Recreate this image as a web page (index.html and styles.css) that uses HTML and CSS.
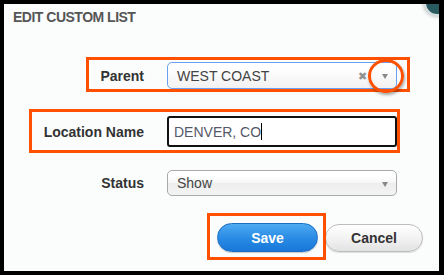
FILE: index.html
```html
<!DOCTYPE html>
<html>
<head>
<meta charset="utf-8">
<link rel="stylesheet" href="styles.css">
</head>
<body>
<div class="dialog">
  <div class="close-btn"></div>
  <h1 class="title">EDIT CUSTOM LIST</h1>
  <div class="form">
    <div class="row row-parent">
      <label class="label">Parent</label>
      <div class="select focused">
        <span class="select-text">WEST COAST</span>
        <span class="clear">&#x2716;</span>
        <span class="arrow"></span>
      </div>
    </div>
    <div class="row row-location">
      <label class="label">Location Name</label>
      <div class="text-input"><span class="input-text">DENVER, CO</span><span class="caret"></span></div>
    </div>
    <div class="row row-status">
      <label class="label">Status</label>
      <div class="select">
        <span class="select-text">Show</span>
        <span class="arrow"></span>
      </div>
    </div>
    <div class="buttons">
      <button class="btn btn-save">Save</button>
      <button class="btn btn-cancel">Cancel</button>
    </div>
  </div>
  <div class="annot annot-parent"></div>
  <div class="annot annot-location"></div>
  <div class="annot annot-save"></div>
  <div class="annot-circle"></div>
</div>
</body>
</html>
```

FILE: styles.css
```css
html, body {
  margin: 0;
  padding: 0;
  background: #000;
}
body {
  width: 444px;
  height: 275px;
  overflow: hidden;
  font-family: "Liberation Sans", Arial, sans-serif;
}
.dialog {
  position: relative;
  margin: 4px 0 0 4px;
  width: 435px;
  height: 267px;
  background: #fbfdfd;
  overflow: hidden;
}
.close-btn {
  position: absolute;
  left: 420px;
  top: -14px;
  width: 22px;
  height: 22px;
  border-radius: 50%;
  background: #285a60;
  border: 2px solid #d6e0e1;
  box-shadow: 0 0 4px rgba(0,0,0,0.35);
}
.title {
  margin: 0;
  padding: 5px 9px 0;
  font-size: 14px;
  line-height: 16px;
  letter-spacing: -0.5px;
  font-weight: bold;
  color: #555;
}
.form {
  margin-top: 37px;
}
.row {
  display: flex;
  align-items: center;
  gap: 23px;
}
.row-parent { height: 27px; }
.row-location { height: 31px; margin-top: 27px; }
.row-status { height: 26px; margin-top: 23px; }
.label {
  width: 140px;
  text-align: right;
  font-size: 14px;
  font-weight: bold;
  color: #333;
}
.select {
  position: relative;
  box-sizing: border-box;
  width: 230px;
  height: 100%;
  display: flex;
  align-items: center;
  padding-left: 9px;
  border: 1px solid #aaa;
  border-radius: 5px;
  background: linear-gradient(#ffffff 20%, #f6f6f6 50%, #eeeeee 52%, #f4f4f4 100%);
  color: #444;
  font-size: 14px;
}
.select.focused {
  border-color: #6b9ff0;
  background: linear-gradient(#ffffff 20%, #f8f8f8 60%, #f2f2f2 100%);
}
.clear {
  position: absolute;
  right: 29px;
  top: 7px;
  font-size: 11px;
  line-height: 12px;
  color: #909090;
}
.arrow {
  position: absolute;
  right: 8px;
  top: 11px;
  width: 0;
  height: 0;
  border-left: 3.5px solid transparent;
  border-right: 3.5px solid transparent;
  border-top: 5px solid #888;
}
.text-input {
  box-sizing: border-box;
  width: 230px;
  height: 100%;
  display: flex;
  align-items: center;
  padding-left: 5px;
  border: 2px solid #111;
  border-radius: 3px;
  background: #fff;
  color: #545867;
  font-size: 14px;
}
.caret {
  display: inline-block;
  width: 1px;
  height: 17px;
  background: #000;
}
.buttons {
  display: flex;
  justify-content: flex-end;
  align-items: center;
  gap: 7px;
  margin-top: 27px;
  padding-right: 16px;
}
.btn {
  box-sizing: border-box;
  font-family: "Liberation Sans", Arial, sans-serif;
  font-size: 14px;
  font-weight: bold;
  border-radius: 15px;
  padding: 0;
}
.btn-save {
  width: 101px;
  height: 29px;
  color: #fff;
  border: 1px solid #1a6ec4;
  background: linear-gradient(#4eaaf0 0%, #2b8ce6 50%, #1877d8 100%);
  box-shadow: 0 1px 1px rgba(0,0,0,0.2);
}
.btn-cancel {
  width: 98px;
  height: 28px;
  color: #333;
  border: 1px solid #bdbdbd;
  background: linear-gradient(#ffffff 0%, #f3f3f3 50%, #e2e2e2 100%);
  box-shadow: 0 1px 1px rgba(0,0,0,0.12);
}
.annot {
  position: absolute;
  box-sizing: border-box;
  border: 3px solid #ff5000;
}
.annot-parent { left: 82px; top: 53px; width: 324px; height: 35px; }
.annot-location { left: 25px; top: 105px; width: 371px; height: 44px; }
.annot-save { left: 203px; top: 209px; width: 119px; height: 47px; }
.annot-circle {
  position: absolute;
  box-sizing: border-box;
  left: 364px;
  top: 55px;
  width: 36px;
  height: 34px;
  border: 3px solid #ff5000;
  border-radius: 50%;
  box-shadow: 1px 2px 3px rgba(0,0,0,0.35);
}
```
